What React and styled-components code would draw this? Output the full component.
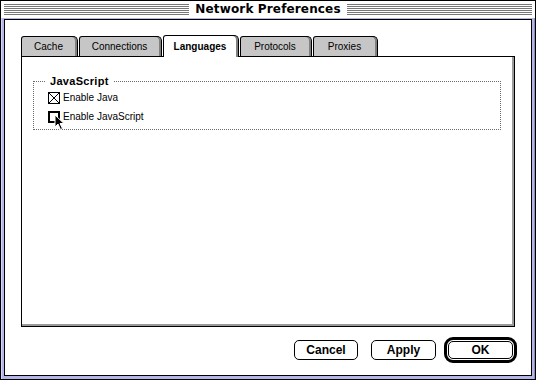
import React from 'react';
import styled, { createGlobalStyle } from 'styled-components';

const GlobalStyle = createGlobalStyle`
  html, body {
    margin: 0;
    padding: 0;
    background: #ffffff;
  }
  body {
    font-family: "Liberation Sans", Arial, sans-serif;
    color: #000;
  }
`;

const Window = styled.div`
  box-sizing: border-box;
  width: 536px;
  height: 380px;
  border: 1px solid #000;
  background: #b6b6e6;
  display: flex;
  flex-direction: column;
`;

const TitleBar = styled.div`
  height: 17px;
  display: flex;
  align-items: center;
  padding: 0 3px;
  background: #ffffff;
`;

const Stripes = styled.div`
  flex: 1;
  height: 11px;
  background: repeating-linear-gradient(to bottom, #777 0 1px, #fff 1px 2px);
`;

const Title = styled.div`
  padding: 0 6px;
  font: bold 12px/17px "DejaVu Sans", sans-serif;
  letter-spacing: 0.15px;
  white-space: nowrap;
`;

const Frame = styled.div`
  flex: 1;
  display: flex;
  min-height: 0;
  padding: 1px 3px 3px 3px;
  box-shadow: inset 1px 0 0 #d6d6fa, inset -1px 0 0 #8c8cc0;
`;

const Content = styled.div`
  flex: 1;
  display: flex;
  flex-direction: column;
  border: 1px solid #000;
  background: #fff;
  padding: 15px 14px 12px 16px;
`;

const TabArea = styled.div`
  flex: 1;
  display: flex;
  flex-direction: column;
  margin-right: 2px;
`;

const TabRow = styled.div`
  display: flex;
  align-items: flex-end;
  gap: 1px;
  height: 21px;
  position: relative;
  z-index: 1;
`;

const Tab = styled.div`
  box-sizing: border-box;
  width: ${(p) => p.$w}px;
  height: ${(p) => (p.$active ? 22 : 20)}px;
  margin-bottom: ${(p) => (p.$active ? -1 : 0)}px;
  border: 1px solid #000;
  border-bottom: none;
  border-radius: 3px 5px 0 0;
  background: ${(p) => (p.$active ? '#fff' : '#c6c6c6')};
  box-shadow: inset -2px 0 0 #808080;
  display: flex;
  align-items: center;
  justify-content: center;
  padding-right: 2px;
  font-size: 10px;
  font-weight: ${(p) => (p.$active ? 'bold' : 'normal')};
  white-space: nowrap;
`;

const Panel = styled.div`
  flex: 1;
  border: 1px solid #000;
  box-shadow: inset -2px -2px 0 #9a9a9a;
  padding: 18px 13px 0 11px;
`;

const Group = styled.fieldset`
  margin: 0;
  min-width: 0;
  padding: 1px 12px 3px 14px;
  border: 1px dotted #6a6a6a;
`;

const GroupLegend = styled.legend`
  padding: 0 4px;
  margin-left: -2px;
  font: bold 11px/12px "Liberation Sans", Arial, sans-serif;
  letter-spacing: 0.3px;
`;

const Row = styled.div`
  display: flex;
  align-items: center;
  gap: 3px;
  height: 19px;
  font-size: 10px;
`;

const Box = styled.div`
  position: relative;
  box-sizing: border-box;
  width: 12px;
  height: 12px;
  border: ${(p) => (p.$pressed ? 2 : 1)}px solid #000;
  background: #fff;
  flex: none;
`;

const Cursor = styled.svg`
  position: absolute;
  left: 4px;
  top: 1px;
  overflow: visible;
`;

const Footer = styled.div`
  display: flex;
  align-items: center;
  justify-content: flex-end;
  height: 26px;
  margin-top: 10px;
`;

const Button = styled.div`
  box-sizing: border-box;
  width: ${(p) => (p.$w ? `${p.$w}px` : 'auto')};
  height: ${(p) => (p.$fill ? '100%' : '20px')};
  flex: ${(p) => (p.$fill ? 1 : 'none')};
  margin-right: ${(p) => p.$mr || 0}px;
  border: 1px solid #000;
  border-radius: 5px;
  background: #fff;
  display: flex;
  align-items: center;
  justify-content: center;
  font: bold 12px "Liberation Sans", Arial, sans-serif;
`;

const DefaultRing = styled.div`
  box-sizing: border-box;
  width: 73px;
  height: 26px;
  border: 3px solid #000;
  border-radius: 9px;
  padding: 1px;
  display: flex;
`;

const tabs = [
  { label: 'Cache', w: 57 },
  { label: 'Connections', w: 83 },
  { label: 'Languages', w: 76, active: true },
  { label: 'Protocols', w: 72 },
  { label: 'Proxies', w: 65 },
];

function CheckBox({ checked, pressed }) {
  return (
    <Box $pressed={pressed}>
      {checked && (
        <svg width="10" height="10" viewBox="0 0 10 10" style={{ display: 'block' }}>
          <path d="M0 0 L10 10 M10 0 L0 10" stroke="#000" strokeWidth="1" />
        </svg>
      )}
      {pressed && (
        <Cursor width="11" height="17" viewBox="0 0 11 17">
          <path
            d="M1 1 L1 13 L4 10 L6.5 15.5 L8.5 14.5 L6 9.5 L10 9.5 Z"
            fill="#000"
            stroke="#fff"
            strokeWidth="1"
            strokeLinejoin="miter"
          />
        </Cursor>
      )}
    </Box>
  );
}

export default function App() {
  return (
    <>
      <GlobalStyle />
      <Window>
        <TitleBar>
          <Stripes />
          <Title>Network Preferences</Title>
          <Stripes />
        </TitleBar>
        <Frame>
          <Content>
            <TabArea>
              <TabRow>
                {tabs.map((t) => (
                  <Tab key={t.label} $w={t.w} $active={t.active}>
                    {t.label}
                  </Tab>
                ))}
              </TabRow>
              <Panel>
                <Group>
                  <GroupLegend>JavaScript</GroupLegend>
                  <Row>
                    <CheckBox checked />
                    <span>Enable Java</span>
                  </Row>
                  <Row>
                    <CheckBox pressed />
                    <span>Enable JavaScript</span>
                  </Row>
                </Group>
              </Panel>
            </TabArea>
            <Footer>
              <Button $w={64} $mr={13}>Cancel</Button>
              <Button $w={65} $mr={8}>Apply</Button>
              <DefaultRing>
                <Button $fill>OK</Button>
              </DefaultRing>
            </Footer>
          </Content>
        </Frame>
      </Window>
    </>
  );
}
